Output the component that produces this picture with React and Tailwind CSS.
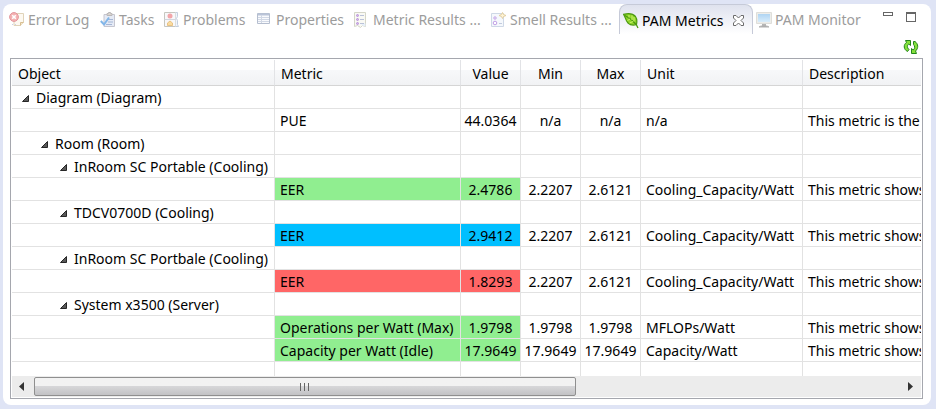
const ErrorLogIcon = () => (
  <svg width="16" height="16" viewBox="0 0 16 16">
    <path d="M5 1.500h9.500v9l-3 3H5z" fill="#fdf8ee" stroke="#d9c9a8" />
    <path d="M14.500 10.500h-3v3" fill="#f3e3c0" stroke="#cfae77" />
    <circle cx="5" cy="5" r="4.400" fill="#f2a0a0" stroke="#dd7c84" />
    <path d="M3.200 3.200l3.600 3.600M6.800 3.200L3.200 6.800" stroke="#fff" strokeWidth="1.600" />
    <path d="M3 12.500h1M6 12.500h1" stroke="#bcc7e0" />
  </svg>
);

const TasksIcon = () => (
  <svg width="16" height="16" viewBox="0 0 16 16">
    <path d="M4 2.500h10.500v12H4z" fill="#dfe6f3" stroke="#b9b8c4" />
    <path d="M7 3.500V1.500h1.500V.5h2v1H12v2z" fill="#d3cdc4" stroke="#aaa6a8" />
    <path d="M8 7.500h5M8 10h5M6 12.500h6" stroke="#8fa5cb" />
    <path d="M.8 9l3.200 3.500L9 5.500" fill="none" stroke="#63a5e4" strokeWidth="2" />
  </svg>
);

const ProblemsIcon = () => (
  <svg width="16" height="16" viewBox="0 0 16 16">
    <path d="M.5.500h11v14H.5z" fill="#f7f7fa" stroke="#b9b9b0" />
    <path d="M11.500.500h2v4l-1 2 1 2v4l1 2h-3" fill="#eef3fb" stroke="#b5c2d8" />
    <path d="M.5 7.500h11" stroke="#c7cbd6" />
    <circle cx="6" cy="4" r="2.500" fill="#f08f94" />
    <path d="M6 9l2.500 2v2.500h-5V11z" fill="#f8d48a" stroke="#e5b463" />
  </svg>
);

const PropertiesIcon = () => (
  <svg width="16" height="16" viewBox="0 0 16 16">
    <path d="M.5 1.500h12v10H.5z" fill="#f8fafd" stroke="#a3aec4" />
    <path d="M1 2.500h11" stroke="#a9b6cf" strokeWidth="2" />
    <path d="M1 5.500h11M1 7.500h11M1 9.500h11M4.500 3v8" stroke="#c6cfdf" />
  </svg>
);

const MetricResultsIcon = () => (
  <svg width="16" height="16" viewBox="0 0 16 16">
    <path d="M.5.500h11v14l-3-1-2 2-3-2-3 1z" fill="#f8f8f2" stroke="#cbcdbb" />
    <path d="M7 11.500h4.500v3l-3-1z" fill="#e2edf9" />
    <g fill="#c9a0e8" stroke="#a878cf">
      <circle cx="3.500" cy="3.500" r="1" />
      <circle cx="3.500" cy="7.500" r="1" />
      <circle cx="3.500" cy="11.500" r="1" />
    </g>
    <path d="M6 3.500h4M6 7.500h4M6 11.500h4" stroke="#a9b4d0" />
  </svg>
);

const SmellResultsIcon = () => (
  <svg width="16" height="16" viewBox="0 0 16 16">
    <path d="M.5 1.500h12v13H.5z" fill="#f3f7fc" stroke="#c3cfe0" />
    <circle cx="4" cy="6" r="1.200" fill="#fff" stroke="#b187e0" />
    <circle cx="4" cy="11" r="1.800" fill="#fff" stroke="#b187e0" />
    <path d="M8 11.500h3" stroke="#b4bfd6" />
    <path d="M11.500.500l1 2 2.500 1-2.500 1-1 2-1-2-2.500-1 2.500-1z" fill="#fff2cb" stroke="#dcc48c" />
  </svg>
);

const LeafIcon = () => (
  <svg width="16" height="16" viewBox="0 0 16 16">
    <path d="M.6 1.300C5 .2 10 .5 12.500 3.500c1.800 2.500 1.500 5.500 1 8-2.500.8-6 .8-8.500-1.500C2.500 7.500 2.500 4 .6 1.300z" fill="#8fd429" stroke="#4c9a10" strokeWidth="1.200" />
    <path d="M2 2.500c4 2 8 5 11.500 9.500l1.500 3" fill="none" stroke="#4c9a10" strokeWidth="1.300" />
    <path d="M6 4.500V2M9 7V2.500M7 6L4.500 7.500M10 8.500L6.500 10M11 8.500V4" stroke="#c9f06e" />
  </svg>
);

const MonitorIcon = () => (
  <svg width="16" height="16" viewBox="0 0 16 16">
    <defs>
      <linearGradient id="screen" x1="0" y1="0" x2="0" y2="1">
        <stop offset="0" stopColor="#9ccaf0" />
        <stop offset="1" stopColor="#cfe9fb" />
      </linearGradient>
    </defs>
    <path d="M.5.500h15v11H.5z" fill="#e9e9e6" stroke="#d6d6d2" />
    <path d="M2 2h12v8H2z" fill="url(#screen)" />
    <path d="M6 12h4v2H6z" fill="#a4a4a4" />
    <path d="M3 15c1-1.500 9-1.500 10 0z" fill="#8c8c8c" stroke="#a0a0a0" />
  </svg>
);

const CloseIcon = () => (
  <svg width="11" height="11" viewBox="0 0 11 11">
    <path d="M.5.500h2.500l2.500 2.500L8 .5h2.500V3L8 5.500l2.500 2.500v2.500H8L5.500 8 3 10.500H.5V8L3 5.500.5 3z" fill="#fff" stroke="#6b6b6b" />
  </svg>
);

const RefreshIcon = () => (
  <svg width="16" height="16" viewBox="0 0 16 16" fill="#86e03c" stroke="#23861a" strokeLinejoin="miter">
    <path d="M4.500 12.500C.5 10.500.2 5.500 3.500 3.500L2.500 1.500h5v5L5.800 5C3.800 6.500 4 8.500 6 10.500z" />
    <path d="M10.500 2.500h1.500c3.500 2.500 3.500 7 .5 9.500l1 2.500h-5v-5l1.700 1.500c2-1.500 1.800-4 .3-5.500z" />
  </svg>
);

const tabs = [
  { label: "Error Log", Icon: ErrorLogIcon, width: "w-[91px]" },
  { label: "Tasks", Icon: TasksIcon, width: "w-16" },
  { label: "Problems", Icon: ProblemsIcon, width: "w-[93px]" },
  { label: "Properties", Icon: PropertiesIcon, width: "w-[97px]" },
  { label: "Metric Results ...", Icon: MetricResultsIcon, width: "w-[137px]" },
  { label: "Smell Results ...", Icon: SmellResultsIcon, width: "w-[131px]" },
  { label: "PAM Metrics", Icon: LeafIcon, width: "w-[134px]", active: true },
  { label: "PAM Monitor", Icon: MonitorIcon, width: "w-[114px]" },
];

const columns = [
  { label: "Object", width: "w-[263px]", align: "pl-1.5 text-left" },
  { label: "Metric", width: "w-[186px]", align: "pl-1.5 text-left" },
  { label: "Value", width: "w-[60px]", align: "text-center" },
  { label: "Min", width: "w-[60px]", align: "text-center" },
  { label: "Max", width: "w-[60px]", align: "text-center" },
  { label: "Unit", width: "w-[162px]", align: "pl-1.5 text-left" },
  { label: "Description", width: "", align: "pl-1.5 text-left" },
];

const GREEN = "bg-[#90ee90]";
const BLUE = "bg-[#00bfff]";
const RED = "bg-[#ff6666]";

const rows = [
  { object: "Diagram (Diagram)", indent: "pl-2.5" },
  { cells: ["PUE", "44.0364", "n/a", "n/a", "n/a", "This metric is the"], tint: "" },
  { object: "Room (Room)", indent: "pl-[29px]" },
  { object: "InRoom SC Portable (Cooling)", indent: "pl-12" },
  { cells: ["EER", "2.4786", "2.2207", "2.6121", "Cooling_Capacity/Watt", "This metric shows"], tint: GREEN },
  { object: "TDCV0700D (Cooling)", indent: "pl-12" },
  { cells: ["EER", "2.9412", "2.2207", "2.6121", "Cooling_Capacity/Watt", "This metric shows"], tint: BLUE },
  { object: "InRoom SC Portbale (Cooling)", indent: "pl-12" },
  { cells: ["EER", "1.8293", "2.2207", "2.6121", "Cooling_Capacity/Watt", "This metric shows"], tint: RED },
  { object: "System x3500 (Server)", indent: "pl-12" },
  { cells: ["Operations per Watt (Max)", "1.9798", "1.9798", "1.9798", "MFLOPs/Watt", "This metric shows"], tint: GREEN },
  { cells: ["Capacity per Watt (Idle)", "17.9649", "17.9649", "17.9649", "Capacity/Watt", "This metric shows"], tint: GREEN },
];

const cellAlign = ["pl-[5px]", "text-center", "text-center", "text-center", "pl-[5px]", "pl-[5px]"];
const cellBorder = "overflow-hidden border-r border-b border-[#e2e2e2] pt-0.5 pr-0 pb-0 last:border-r-0";

function Tab({ label, Icon, width, active }) {
  return (
    <div
      className={`flex h-[30px] shrink-0 items-center gap-[3px] pt-0.5 pl-[3px] ${width} ${
        active
          ? "rounded-t-lg border border-b-0 border-[#c6cad8] bg-linear-to-b from-[#dfe2ee] to-white text-black"
          : "text-[#9c9c9c]"
      }`}
    >
      <button role="tab" aria-selected={!!active} className="flex items-center gap-[3px]">
        <span className={active ? "" : "opacity-80"}>
          <Icon />
        </span>
        <span>{label}</span>
      </button>
      {active && (
        <button aria-label="Close" className="pl-1.5">
          <CloseIcon />
        </button>
      )}
    </div>
  );
}

export default function App() {
  return (
    <div className="bg-[#dfe4f5] pt-1 pr-[5px] pb-1 pl-[3px] font-['Noto_Sans',sans-serif] text-[14px] leading-5 whitespace-nowrap text-black">
      <div className="rounded-lg bg-white pb-1.5">
        <div className="flex items-start justify-between pr-[15px] pl-[3px]">
          <div role="tablist" className="flex">
            {tabs.map((tab) => (
              <Tab key={tab.label} {...tab} />
            ))}
          </div>
          <div className="flex items-start gap-[13px] pt-2">
            <button aria-label="Minimize" className="h-1 w-2.5 border border-[#666] bg-white" />
            <button aria-label="Maximize" className="h-2.5 w-2.5 border border-t-2 border-[#666] bg-white" />
          </div>
        </div>
        <div className="flex h-6 items-center justify-end pt-0.5 pr-3">
          <button aria-label="Refresh">
            <RefreshIcon />
          </button>
        </div>
        <div className="mr-2 ml-[7px] border border-[#a5a7ae] p-px">
          <div className="overflow-hidden">
            <table className="w-full table-fixed border-separate border-spacing-0">
              <thead>
                <tr className="h-[26px] bg-linear-to-b from-white from-40% via-[#f7f8fa] via-40% to-[#f1f2f4]">
                  {columns.map((column) => (
                    <th
                      key={column.label}
                      className={`border-r border-b border-[#d5d5d5] border-r-[#e2e3e6] pt-0.5 pr-0 pb-0 font-normal last:border-r-0 ${column.width} ${column.align}`}
                    >
                      {column.label}
                    </th>
                  ))}
                </tr>
              </thead>
              <tbody>
                {rows.map((row, index) => (
                  <tr key={index} className="h-[23px]">
                    <td className={`${cellBorder} pl-0`}>
                      {row.object && (
                        <div className={`flex items-center gap-[7px] ${row.indent}`}>
                          <button aria-label={`Collapse ${row.object}`}>
                            <svg width="7" height="7" viewBox="0 0 7 7">
                              <path d="M6.500.500v6h-6z" fill="#595959" stroke="#262626" />
                            </svg>
                          </button>
                          {row.object}
                        </div>
                      )}
                    </td>
                    {cellAlign.map((align, i) => (
                      <td key={i} className={`${cellBorder} ${align} ${row.tint && i < 2 ? row.tint : ""}`}>
                        {row.cells?.[i]}
                      </td>
                    ))}
                  </tr>
                ))}
                <tr className="h-3.5">
                  {columns.map((column) => (
                    <td key={column.label} className="border-r border-[#e2e2e2] p-0 last:border-r-0" />
                  ))}
                </tr>
              </tbody>
            </table>
          </div>
          <div className="flex h-[21px] items-center bg-[#ececec] pr-2 pl-[7px]">
            <button aria-label="Scroll left">
              <svg width="5" height="9" viewBox="0 0 5 9">
                <path d="M5 0v9L0 4.500z" fill="#333" />
              </svg>
            </button>
            <div className="ml-2.5 flex-1 pr-3.5">
              <div className="flex h-[19px] w-[63%] items-center justify-center gap-[3px] rounded-xs border border-[#8f8f8f] bg-linear-to-b from-[#f2f2f2] from-45% via-[#d8d8da] via-45% to-[#c2c2c5]">
                <span className="h-2 w-px bg-[#666]" />
                <span className="h-2 w-px bg-[#666]" />
                <span className="h-2 w-px bg-[#666]" />
              </div>
            </div>
            <button aria-label="Scroll right">
              <svg width="5" height="9" viewBox="0 0 5 9">
                <path d="M0 0v9l5-4.500z" fill="#333" />
              </svg>
            </button>
          </div>
        </div>
      </div>
    </div>
  );
}
